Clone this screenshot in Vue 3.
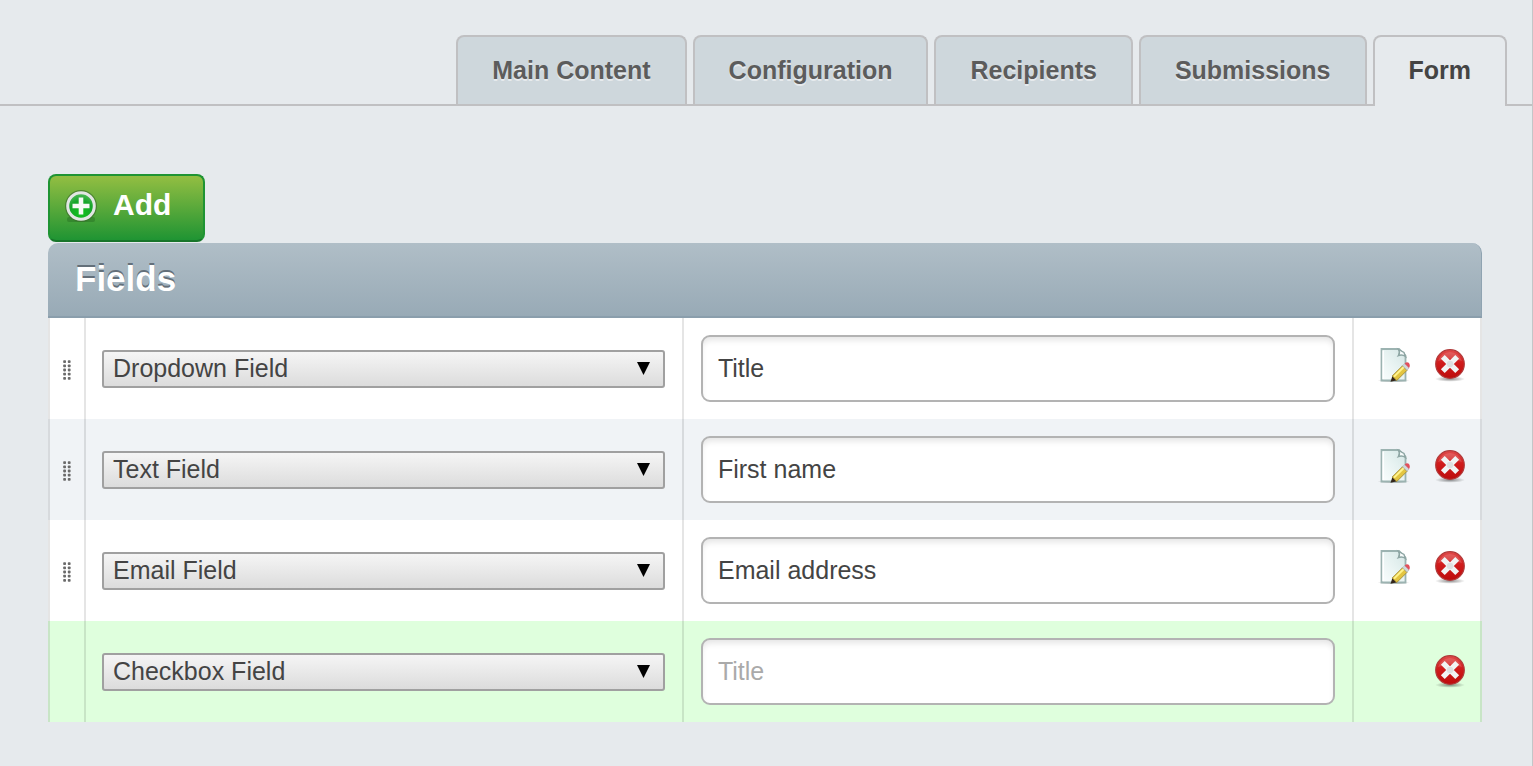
<script setup>
import { ref } from 'vue'

const tabs = ['Main Content', 'Configuration', 'Recipients', 'Submissions', 'Form']
const active = ref('Form')
const types = ['Dropdown Field', 'Text Field', 'Email Field', 'Checkbox Field']

const rows = ref([
  { id: 1, type: 'Dropdown Field', title: 'Title', saved: true },
  { id: 2, type: 'Text Field', title: 'First name', saved: true },
  { id: 3, type: 'Email Field', title: 'Email address', saved: true },
  { id: 4, type: 'Checkbox Field', title: '', saved: false },
])
let nextId = 5

function addRow() {
  rows.value.push({ id: nextId++, type: 'Text Field', title: '', saved: false })
}
function removeRow(id) {
  rows.value = rows.value.filter((row) => row.id !== id)
}
</script>

<template>
  <div class="page">
    <svg class="defs" width="0" height="0" aria-hidden="true">
      <defs>
        <linearGradient id="red" x1="0" y1="0" x2="0" y2="1">
          <stop offset="0" stop-color="#e04a4a" />
          <stop offset="0.45" stop-color="#d01c1c" />
          <stop offset="1" stop-color="#bd0d0d" />
        </linearGradient>
        <radialGradient id="green" cx="0.5" cy="0.75" r="0.75">
          <stop offset="0" stop-color="#10c31c" />
          <stop offset="0.6" stop-color="#17a52b" />
          <stop offset="1" stop-color="#55bd5f" />
        </radialGradient>
        <linearGradient id="paper" x1="1" y1="0" x2="0" y2="1">
          <stop offset="0" stop-color="#d4e6e5" />
          <stop offset="0.5" stop-color="#e8f3f2" />
          <stop offset="1" stop-color="#fbfefe" />
        </linearGradient>
        <radialGradient id="shade">
          <stop offset="0" stop-color="#000" stop-opacity="0.45" />
          <stop offset="1" stop-color="#000" stop-opacity="0" />
        </radialGradient>
      </defs>
    </svg>

    <nav class="tabs">
      <a
        v-for="tab in tabs"
        :key="tab"
        href="#"
        class="tab"
        :class="{ active: tab === active }"
        @click.prevent="active = tab"
      >{{ tab }}</a>
    </nav>

    <main class="content">
      <button type="button" class="add" @click="addRow">
        <svg width="32" height="36" viewBox="0 0 32 36" aria-hidden="true">
          <rect x="2" y="29" width="28" height="5" rx="2" fill="#1d5c1e" opacity="0.35" />
          <circle cx="16" cy="18" r="16" fill="#3c6b2c" opacity="0.65" />
          <circle cx="16" cy="18" r="13.300" fill="url(#green)" stroke="#e2e6e4" stroke-width="3" />
          <path d="M16 9.500V26.500M7.500 18H24.500" stroke="#f6faf6" stroke-width="4.600" />
        </svg>
        <span>Add</span>
      </button>

      <table class="fields">
        <colgroup>
          <col class="c-drag" />
          <col class="c-type" />
          <col />
          <col class="c-actions" />
        </colgroup>
        <thead>
          <tr>
            <th colspan="4">Fields</th>
          </tr>
        </thead>
        <tbody>
          <tr v-for="row in rows" :key="row.id" :class="{ fresh: !row.saved }">
            <td class="drag">
              <svg v-if="row.saved" width="8" height="20" viewBox="0 0 8 20" aria-hidden="true">
                <g fill="#6a6a6a">
                  <template v-for="n in 5" :key="n">
                    <rect x="0.2" :y="(n - 1) * 4.2 + 0.2" width="2.800" height="2.800" rx="0.8" />
                    <rect x="4.800" :y="(n - 1) * 4.2 + 0.2" width="2.800" height="2.800" rx="0.8" />
                  </template>
                </g>
              </svg>
            </td>
            <td class="type">
              <div class="select">
                <select v-model="row.type" aria-label="Field type">
                  <option v-for="type in types" :key="type">{{ type }}</option>
                </select>
                <svg class="arrow" width="13" height="13" viewBox="0 0 13 13" aria-hidden="true">
                  <path d="M0 0H13L6.500 13Z" fill="#000" />
                </svg>
              </div>
            </td>
            <td class="title">
              <input v-model="row.title" type="text" placeholder="Title" aria-label="Field title" />
            </td>
            <td class="actions">
              <div class="icons">
                <button v-if="row.saved" type="button" class="icon" aria-label="Edit">
                  <svg width="32" height="36" viewBox="0 0 32 36" aria-hidden="true">
                    <ellipse cx="15.500" cy="33.500" rx="16" ry="2" fill="url(#shade)" />
                    <path d="M3.500 2H21L27.500 8.500V33.500H3.500Z" fill="url(#paper)" stroke="#9cb3b1" stroke-width="1.800" />
                    <path d="M5.200 3.500V32" stroke="#fff" stroke-width="1.500" />
                    <path d="M20.500 2.500C22 5 21.500 7 20.500 8.500C23 7.500 25.500 8 27.500 9.500L26 5.500Z" fill="#f7fbfb" stroke="#8da5a3" stroke-width="1.400" />
                    <path d="M12.500 34.800L14.600 28.500L19.200 33.200Z" fill="#33251a" />
                    <path d="M14.200 29L24.500 18.800L29 23.300L18.800 33.500Z" fill="#e3c541" stroke="#a18a34" stroke-width="0.900" />
                    <path d="M16 29.600L25.800 20" stroke="#fff38c" stroke-width="2" />
                    <path d="M24.500 18.800L26.700 16.600L31 21L29 23.300Z" fill="#d2d7da" stroke="#9aa1a6" stroke-width="0.500" />
                    <path d="M26.700 16.600Q28.600 14.600 30.700 15.800Q32.800 18.500 31 21Z" fill="#e2505c" />
                  </svg>
                </button>
                <button type="button" class="icon" aria-label="Delete" @click="removeRow(row.id)">
                  <svg width="32" height="36" viewBox="0 0 32 36" aria-hidden="true">
                    <ellipse cx="16" cy="32" rx="15" ry="2.800" fill="url(#shade)" />
                    <circle cx="16" cy="17" r="14.300" fill="url(#red)" stroke="#b03a3a" stroke-width="1.200" />
                    <path d="M4 14A12.500 12.500 0 0 1 28 14Q16 9 4 14Z" fill="#fff" opacity="0.150" />
                    <path d="M8.800 9.800L23.200 24.200M23.200 9.800L8.800 24.200" stroke="#f1f4f4" stroke-width="5.400" />
                    <circle cx="16" cy="17" r="3.200" fill="#dde1e2" />
                  </svg>
                </button>
              </div>
            </td>
          </tr>
        </tbody>
      </table>
    </main>
  </div>
</template>

<style>
body {
  margin: 0;
  background: #e6eaed;
}
</style>

<style scoped>
.page {
  box-sizing: border-box;
  min-height: 100vh;
  padding-top: 35px;
  border-right: 1px solid #c4c6c8;
  background: #e6eaed;
  font-family: "Liberation Sans", Arial, sans-serif;
  font-size: 25px;
  color: #444;
}
.defs {
  position: absolute;
}
.tabs {
  display: flex;
  justify-content: flex-end;
  gap: 6px;
  padding-right: 25px;
  border-bottom: 2px solid #c0c0c2;
}
.tab {
  padding: 0 34px;
  border: 2px solid #c0c0c2;
  border-bottom: 0;
  border-radius: 8px 8px 0 0;
  background: #ced7dc;
  color: #5c5c5c;
  font-weight: bold;
  line-height: 67px;
  text-decoration: none;
  text-shadow: 0 2px 0 #e6eaed;
}
.tab.active {
  margin-bottom: -2px;
  padding-bottom: 2px;
  background: #e6eaed;
  color: #444;
}
.content {
  padding: 68px 50px 44px 48px;
}
.add {
  display: flex;
  align-items: center;
  gap: 16px;
  box-sizing: border-box;
  height: 68px;
  margin: 0 0 1px;
  padding: 0 32px 4px 15px;
  border: 2px solid #1f9433;
  border-bottom-color: #18752a;
  border-radius: 8px;
  background: linear-gradient(#93be42, #1f9433);
  color: #fff;
  font: bold 30px/34px "Liberation Sans", Arial, sans-serif;
}
.add svg {
  overflow: visible;
}
.add span {
  padding-bottom: 2px;
}
.fields {
  width: 100%;
  table-layout: fixed;
  border-collapse: separate;
  border-spacing: 0;
}
.c-drag {
  width: 38px;
}
.c-type {
  width: 41.7%;
}
.c-actions {
  width: 128px;
}
th {
  box-sizing: border-box;
  height: 75px;
  padding: 0 27px 2px;
  border-right: 1px solid #8fa3b1;
  border-bottom: 2px solid #8a9eac;
  border-radius: 10px 10px 0 0;
  background: linear-gradient(#b0bec7, #98aab6);
  color: #fff;
  font-size: 35px;
  line-height: 40px;
  text-align: left;
  text-shadow: 0 -2px 0 #64707a;
}
td {
  box-sizing: border-box;
  height: 101px;
  padding: 0;
  border-right: 2px solid rgba(0, 0, 0, 0.1);
  background: #fff;
  vertical-align: middle;
}
tr:nth-child(even) td {
  background-color: #f0f3f6;
}
tr.fresh td {
  background-color: #dfffdd;
}
.drag {
  border-left: 2px solid rgba(0, 0, 0, 0.1);
}
.drag svg {
  display: block;
  margin: 2px auto 0;
}
.type {
  padding: 0 17px 0 16px;
}
.select {
  position: relative;
}
select {
  display: block;
  box-sizing: border-box;
  width: 100%;
  height: 38px;
  padding: 0 36px 2px 9px;
  border: 2px solid #a0a0a0;
  border-radius: 3px;
  background: linear-gradient(#f5f5f5, #dcdcdc);
  color: #444;
  font: 25px/32px "Liberation Sans", Arial, sans-serif;
  appearance: none;
}
.arrow {
  position: absolute;
  top: 12px;
  right: 15px;
  pointer-events: none;
}
.title {
  padding: 0 17px;
}
input {
  display: block;
  box-sizing: border-box;
  width: 100%;
  height: 67px;
  padding: 0 15px;
  border: 2px solid #b3b3b3;
  border-radius: 9px;
  background: #fff;
  box-shadow: inset 0 5px 6px -2px #e4e4e4;
  color: #444;
  font: 25px/34px "Liberation Sans", Arial, sans-serif;
}
input::placeholder {
  color: #aaa;
  opacity: 1;
}
.icons {
  display: flex;
  justify-content: flex-end;
  gap: 24px;
  padding: 0 14px 8px 0;
}
.fresh .icons {
  padding-bottom: 2px;
}
.icon {
  padding: 0;
  border: 0;
  background: none;
}
.icon svg {
  display: block;
  overflow: visible;
}
</style>
